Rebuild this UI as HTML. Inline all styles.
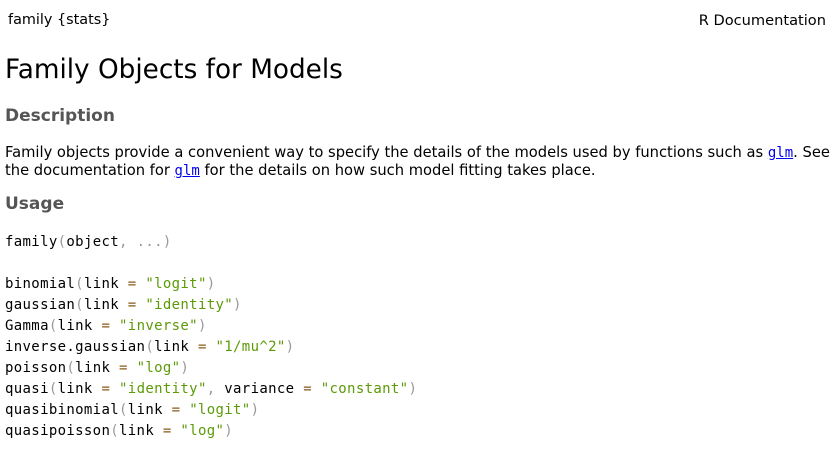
<!DOCTYPE html>
<html><head><meta charset="utf-8"><style>
body{margin:0;width:834px;height:453px;overflow:hidden;background:#fff;font-family:"DejaVu Sans","Liberation Sans",sans-serif;color:#000;position:relative}
.a{position:absolute;white-space:nowrap}
.m{font-family:"DejaVu Sans Mono","Liberation Mono",monospace;font-size:14px;letter-spacing:0.34px}
.p{color:#999}.o{color:#8a5a1a}.s{color:#5c9a08}
h2{margin:0;font-size:17px;color:#555;font-weight:bold}
a{color:#00e;text-decoration:underline}
</style></head><body>
<div class="a" style="left:8px;top:12px;font-size:14.4px">family {stats}</div>
<div class="a" style="right:8px;top:12px;font-size:14.6px">R Documentation</div>
<div class="a" style="left:5px;top:55px;font-size:26.3px">Family Objects for Models</div>
<h2 class="a" style="left:5px;top:106px">Description</h2>
<div class="a" style="left:5px;top:144px;font-size:14.7px;line-height:17px">Family objects provide a convenient way to specify the details of the models used by functions such as <a class="m" style="letter-spacing:0">glm</a>. See<br>the documentation for <a class="m" style="letter-spacing:0">glm</a> for the details on how such model fitting takes place.</div>
<h2 class="a" style="left:5px;top:194px">Usage</h2>
<div class="a m" style="left:5px;top:232px;line-height:21px">family<span class="p">(</span>object<span class="p">,</span> <span class="p">...)</span><br><br>binomial<span class="p">(</span>link <span class="o">=</span> <span class="s">"logit"</span><span class="p">)</span><br>gaussian<span class="p">(</span>link <span class="o">=</span> <span class="s">"identity"</span><span class="p">)</span><br>Gamma<span class="p">(</span>link <span class="o">=</span> <span class="s">"inverse"</span><span class="p">)</span><br>inverse.gaussian<span class="p">(</span>link <span class="o">=</span> <span class="s">"1/mu^2"</span><span class="p">)</span><br>poisson<span class="p">(</span>link <span class="o">=</span> <span class="s">"log"</span><span class="p">)</span><br>quasi<span class="p">(</span>link <span class="o">=</span> <span class="s">"identity"</span><span class="p">,</span> variance <span class="o">=</span> <span class="s">"constant"</span><span class="p">)</span><br>quasibinomial<span class="p">(</span>link <span class="o">=</span> <span class="s">"logit"</span><span class="p">)</span><br>quasipoisson<span class="p">(</span>link <span class="o">=</span> <span class="s">"log"</span><span class="p">)</span></div>
</body></html>
